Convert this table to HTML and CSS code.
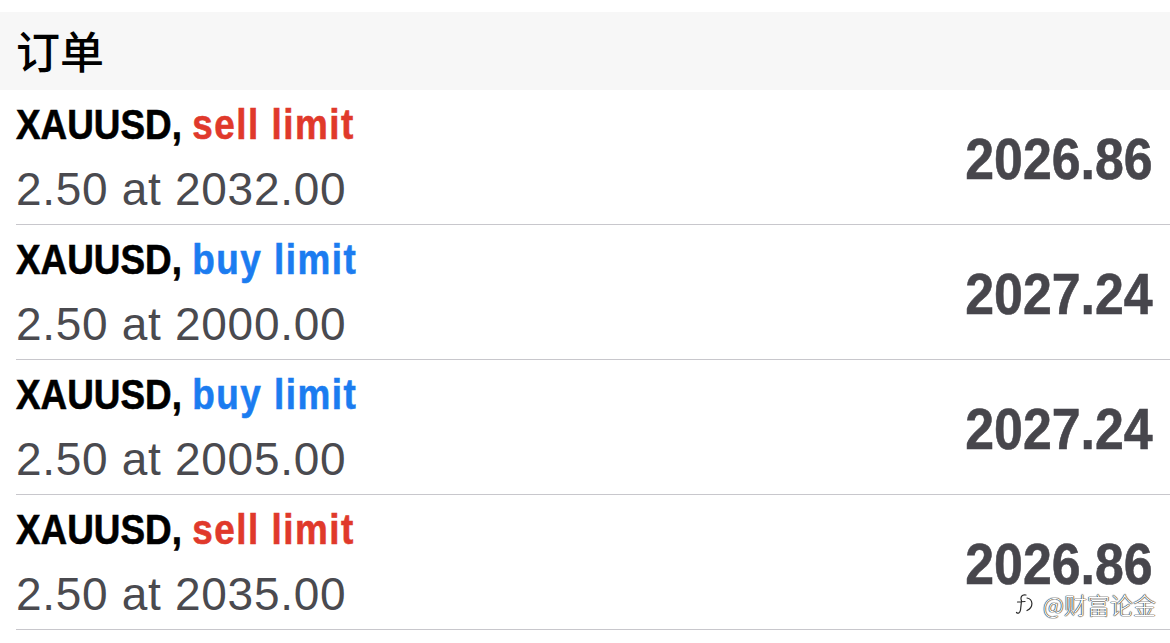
FILE: index.html
```html
<!DOCTYPE html>
<html lang="zh">
<head>
<meta charset="utf-8">
<link rel="stylesheet" href="styles.css">
</head>
<body>
<div class="page">
  <div class="header">订单</div>
  <div class="list">
    <div class="row">
      <div class="info">
        <div class="title"><span class="sym">XAUUSD,</span> <span class="act sell">sell limit</span></div>
        <div class="detail">2.50 at 2032.00</div>
      </div>
      <div class="price">2026.86</div>
    </div>
    <div class="row">
      <div class="info">
        <div class="title"><span class="sym">XAUUSD,</span> <span class="act buy">buy limit</span></div>
        <div class="detail">2.50 at 2000.00</div>
      </div>
      <div class="price">2027.24</div>
    </div>
    <div class="row">
      <div class="info">
        <div class="title"><span class="sym">XAUUSD,</span> <span class="act buy">buy limit</span></div>
        <div class="detail">2.50 at 2005.00</div>
      </div>
      <div class="price">2027.24</div>
    </div>
    <div class="row last">
      <div class="info">
        <div class="title"><span class="sym">XAUUSD,</span> <span class="act sell">sell limit</span></div>
        <div class="detail">2.50 at 2035.00</div>
      </div>
      <div class="price">2026.86</div>
      <div class="watermark">
        <svg class="wm-icon" width="20" height="24" viewBox="0 0 20 24"><path d="M11 3 C7 2 5 5 6.5 9 L5.5 18 C5 21 3 22 1.5 20.5 M2.5 10 L10 9.5 M12 6 C18 7 19 15 12 18.5" fill="none" stroke="#fff" stroke-width="3.4" stroke-linecap="round"/><path d="M11 3 C7 2 5 5 6.5 9 L5.5 18 C5 21 3 22 1.5 20.5 M2.5 10 L10 9.5 M12 6 C18 7 19 15 12 18.5" fill="none" stroke="#2a2a2a" stroke-width="1.2" stroke-linecap="round"/></svg>
        <span class="wm-text">@财富论金</span>
      </div>
    </div>
  </div>
</div>
</body>
</html>
```
FILE: styles.css
```css
html, body {
  margin: 0;
  padding: 0;
  background: #ffffff;
}
.page {
  width: 1170px;
  height: 643px;
  padding-top: 12px;
  box-sizing: border-box;
  overflow: hidden;
}
.header {
  height: 78px;
  background: #f7f7f7;
  padding-left: 16px;
  display: flex;
  align-items: center;
  font-family: "Noto Sans CJK SC", sans-serif;
  font-weight: 500;
  font-size: 44px;
  color: #000;
  box-sizing: border-box;
  padding-bottom: 2px;
}
.list {
  padding-left: 16px;
}
.row {
  position: relative;
  height: 135px;
  border-bottom: 1px solid #c8c7cc;
  box-sizing: border-box;
  display: flex;
  align-items: center;
  justify-content: space-between;
  padding-right: 17px;
}
.info {
  display: flex;
  flex-direction: column;
}
.title {
  font-family: "Liberation Sans", Arial, sans-serif;
  font-weight: 700;
  font-size: 42px;
  line-height: 64px;
  color: #000;
  white-space: nowrap;
  transform: scaleX(0.878);
  transform-origin: left center;
  -webkit-text-stroke: 0.6px currentColor;
}
.act { letter-spacing: 1.7px; }
.sell { color: #e0392b; }
.buy { color: #1b7cf0; }
.detail {
  font-family: "Liberation Sans", Arial, sans-serif;
  font-size: 46px;
  line-height: 64px;
  color: #4a4a4f;
  letter-spacing: 0.7px;
  white-space: nowrap;
}
.price {
  font-family: "Liberation Sans", Arial, sans-serif;
  font-weight: 700;
  font-size: 58px;
  line-height: 46px;
  color: #47464c;
  margin-top: 4px;
  transform: scaleX(0.894);
  transform-origin: right center;
  -webkit-text-stroke: 0.6px currentColor;
}
.watermark {
  position: absolute;
  right: 14px;
  bottom: 12px;
  display: flex;
  align-items: center;
  gap: 8px;
}
.wm-text {
  font-family: "Noto Sans CJK SC", sans-serif;
  font-size: 23px;
  line-height: 26px;
  font-weight: 300;
  color: #fff;
  text-shadow: 0 0 1px #222, 0 0 1px #222, 0 0 1px #222;
}
```
